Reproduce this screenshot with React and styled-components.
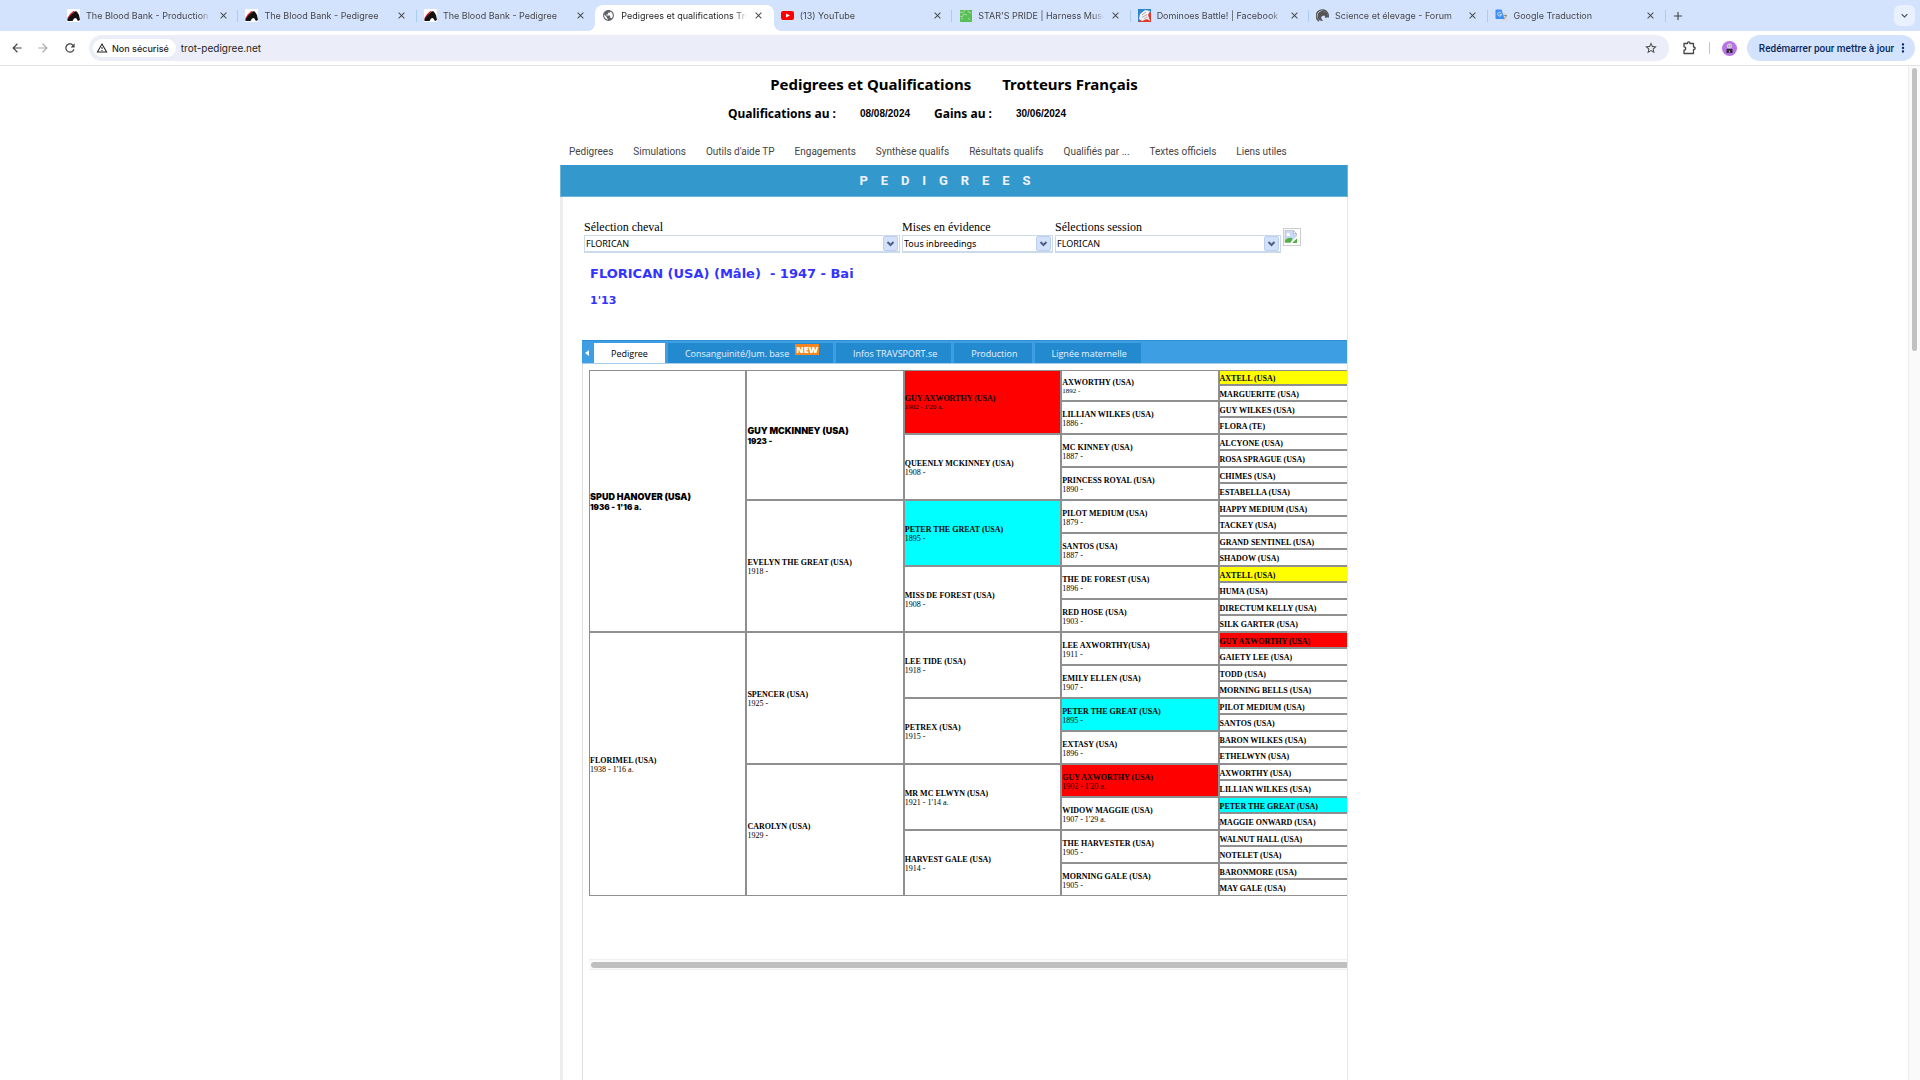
import React from 'react';
import styled, { createGlobalStyle, css } from 'styled-components';
import {
  MdAdd,
  MdArrowBack,
  MdArrowForward,
  MdClose,
  MdExpandMore,
  MdMoreVert,
  MdOutlineWarningAmber,
  MdPublic,
  MdRefresh,
  MdStarBorder,
} from 'react-icons/md';

const tahoma = "Tahoma, 'Noto Sans', sans-serif";
const tabFont = "Tahoma, 'Open Sans', sans-serif";
const times = "'Liberation Serif', 'Times New Roman', serif";
const black = "'Arial Black', Inter, sans-serif";
const wideBlack = "'Arial Black', 'DejaVu Sans', sans-serif";
const roboto = 'Roboto, sans-serif';
const system = 'Inter, sans-serif';

const GlobalStyle = createGlobalStyle`
  * {
    box-sizing: border-box;
  }

  body {
    margin: 0;
    background: #fff;
    color: #000;
    overflow: hidden;
  }

  button, input, select {
    margin: 0;
    padding: 0;
    border: 0;
    background: none;
    color: inherit;
    font: inherit;
  }

  a {
    color: inherit;
    text-decoration: none;
  }
`;

const StyledWrapper = styled.div`
  height: 100vh;
  display: flex;
  flex-direction: column;
`;

/* ---------- browser ---------- */

const StyledTabBar = styled.div`
  height: 31px;
  flex: none;
  display: flex;
  align-items: center;
  padding: 0 5px 0 60px;
  background: #d3e2fd;
  color: #474747;
  font-family: ${system};
  font-size: 9px;
`;

const StyledTabList = styled.div`
  flex: 0 1 1606px;
  min-width: 0;
  display: flex;
  align-self: stretch;
`;

const StyledBrowserTab = styled.div`
  position: relative;
  flex: 1;
  min-width: 0;
  display: flex;
  align-items: center;
  gap: 6px;
  padding: 0 9px 0 7px;

  &::after {
    content: '';
    position: absolute;
    right: 0;
    top: 10px;
    width: 1px;
    height: 12px;
    background: ${({ $divider }) => ($divider ? '#a8cdf0' : 'transparent')};
  }

  ${({ $active }) =>
    $active &&
    css`
      margin-top: 5px;
      padding-bottom: 5px;
      border-radius: 8px 8px 0 0;
      background: #fff;
      color: #1f1f1f;

      &::before,
      &::after {
        content: '';
        position: absolute;
        top: auto;
        bottom: 0;
        width: 8px;
        height: 8px;
      }

      &::before {
        left: -8px;
        background: radial-gradient(circle at 0 0, transparent 8px, #fff 8px);
      }

      &::after {
        right: -8px;
        background: radial-gradient(circle at 100% 0, transparent 8px, #fff 8px);
      }
    `}
`;

const StyledTabTitle = styled.button`
  flex: 1;
  min-width: 0;
  overflow: hidden;
  white-space: nowrap;
  text-align: left;
  mask-image: linear-gradient(to right, #000 calc(100% - 12px), transparent);
`;

const StyledIconButton = styled.button`
  flex: none;
  display: flex;
  align-items: center;
  justify-content: center;
  width: ${({ $size }) => $size}px;
  height: ${({ $size }) => $size}px;
  border-radius: 6px;
  background: ${({ $filled }) => ($filled ? '#e9f0fe' : 'none')};
  color: ${({ $muted }) => ($muted ? '#a9a9a9' : '#474747')};
`;

const StyledSpacer = styled.div`
  flex: 1;
`;

const StyledToolbar = styled.div`
  height: 35px;
  flex: none;
  display: flex;
  align-items: center;
  padding: 0 5px;
  border-bottom: 1px solid #e3e3e3;
  background: #fff;
  font-family: ${system};
  font-size: 10px;
`;

const StyledAddressBar = styled.div`
  flex: 1;
  min-width: 0;
  height: 26px;
  display: flex;
  align-items: center;
  margin: 0 10px 0 6px;
  padding: 0 8px 0 4px;
  border-radius: 13px;
  background: #ebeef8;
  color: #1f1f1f;
`;

const StyledChip = styled.button`
  height: 18px;
  display: flex;
  align-items: center;
  gap: 4px;
  padding: 0 7px 0 3px;
  border-radius: 9px;
  background: #fff;
  font-size: 9px;
  font-weight: 500;
  white-space: nowrap;
`;

const StyledUrl = styled.input`
  flex: 1;
  min-width: 0;
  margin-left: 5px;
  outline: 0;
`;

const StyledDivider = styled.div`
  width: 1px;
  height: 12px;
  margin: 0 12px 0 10px;
  background: #a8cdf0;
`;

const StyledUpdate = styled.button`
  height: 26px;
  display: flex;
  align-items: center;
  gap: 2px;
  margin-left: 10px;
  padding: 0 5px 0 12px;
  border-radius: 13px;
  background: #d3e2fd;
  color: #0b2a5e;
  font-family: ${roboto};
  font-weight: 500;
  white-space: nowrap;
`;

/* ---------- page ---------- */

const StyledViewport = styled.div`
  flex: 1;
  min-height: 0;
  display: flex;
`;

const StyledPage = styled.div`
  flex: 1;
  min-width: 0;
  display: flex;
  flex-direction: column;
  align-items: center;
`;

const StyledScrollbar = styled.div`
  width: 12px;
  flex: none;
  padding: 2px 3px;
  border-left: 1px solid #ececec;
  background: #fafafa;
`;

const StyledThumb = styled.div`
  height: 28%;
  border-radius: 3px;
  background: #c1c1c1;
`;

const StyledHeader = styled.header`
  width: 100%;
  max-width: 788px;
  padding-top: 6px;
  font-family: ${tahoma};
  font-weight: 700;
`;

const StyledTitle = styled.h1`
  margin: 0;
  display: flex;
  justify-content: center;
  gap: 31px;
  font-size: 15px;
  line-height: 24px;
`;

const StyledDates = styled.div`
  display: flex;
  gap: 24px;
  margin-top: 8px;
  padding-left: 168px;
  font-size: 12px;
  line-height: 20px;
`;

const StyledDate = styled.span`
  font-family: 'Liberation Sans', Arial, sans-serif;
  font-size: 10px;
`;

const StyledNav = styled.nav`
  display: flex;
  gap: 20px;
  margin-top: 15px;
  padding-left: 9px;
  color: #444;
  font-family: ${roboto};
  font-size: 10px;
  font-weight: 400;
  line-height: 26px;
  white-space: nowrap;
`;

const StyledMain = styled.main`
  flex: 1;
  width: 100%;
  max-width: 788px;
  display: flex;
  flex-direction: column;
`;

const StyledBanner = styled.h2`
  margin: 0;
  padding-right: 18px;
  border: 1px solid #6fb3d9;
  border-top: 0;
  background: #39c;
  color: #f2f2ff;
  font-family: ${roboto};
  font-size: 13px;
  font-weight: 700;
  line-height: 31px;
  text-align: center;
  white-space: pre;
`;

const StyledContent = styled.div`
  flex: 1;
  min-width: 0;
  display: flex;
  flex-direction: column;
  padding: 23px 0 0 19px;
  border-left: 3px solid #ededed;
  border-right: 1px solid #e6e6e6;
`;

const StyledForm = styled.form`
  display: flex;
  align-items: flex-start;
  gap: 2px;
  padding-left: 2px;
`;

const StyledField = styled.label`
  flex: 0 1 ${({ $width }) => $width}px;
  min-width: 0;
  font-family: ${times};
  font-size: 12px;
  line-height: 15px;
`;

const StyledCombo = styled.span`
  display: flex;
  align-items: center;
  height: 18px;
  padding-right: 1px;
  border: 1px solid #cbdaea;
  border-width: 1px 1px 2px;
  background: #fff;
`;

const StyledSelect = styled.select`
  flex: 1;
  min-width: 0;
  appearance: none;
  padding-left: 1px;
  font-family: ${tahoma};
  font-size: 9px;
  line-height: 14px;
  outline: 0;
`;

const StyledArrow = styled.span`
  width: 15px;
  height: 15px;
  display: flex;
  align-items: center;
  justify-content: center;
  border: 1px solid #bccff0;
  border-radius: 2px;
  background: #d3e1fb;
  color: #4d6185;
`;

const StyledMissing = styled.span`
  display: flex;
  width: 18px;
  height: 18px;
  margin-top: 8px;
  border: 1px solid #ccc;
`;

const StyledHorse = styled.h3`
  margin: 11px 0 0 8px;
  color: #33f;
  font-family: ${wideBlack};
  font-size: 13px;
  font-weight: 900;
  line-height: 20px;
  white-space: pre-wrap;
`;

const StyledRecord = styled.p`
  margin: 9px 0 0 8px;
  color: #33f;
  font-family: ${wideBlack};
  font-size: 11px;
  font-weight: 900;
  line-height: 16px;
`;

const StyledTabStrip = styled.div`
  display: flex;
  align-items: flex-end;
  gap: 3px;
  margin-top: 31px;
  height: 24px;
  border-top: 1px solid #2f8fd5;
  border-bottom: 1px solid #a5cdee;
  background: #3d9ee3;
  color: #fff;
  font-family: ${tabFont};
  font-size: 9px;
`;

const StyledPrevious = styled.button`
  width: 9px;
  height: 20px;
  display: flex;
  align-items: center;
  justify-content: center;
`;

const StyledTab = styled.button`
  height: 20px;
  display: flex;
  align-items: center;
  gap: 6px;
  padding: 0 ${({ $active }) => ($active ? 17 : 14)}px 0 17px;
  background: ${({ $active }) => ($active ? '#fff' : '#238acf')};
  color: ${({ $active }) => ($active ? '#000' : '#e8f4ff')};
  white-space: nowrap;
`;

const StyledNew = styled.span`
  align-self: flex-start;
  margin-top: 1px;
  padding: 0 1px;
  background: #f6861f;
  color: #fff;
  font-weight: 800;
  line-height: 11px;
`;

const StyledPanel = styled.div`
  flex: 1;
  min-width: 0;
  padding: 6px 0 0 6px;
  border-left: 1px solid #dedede;
  overflow: hidden;
`;

const StyledTable = styled.table`
  width: 787px;
  table-layout: fixed;
  border-collapse: separate;
  border-spacing: 0;
  font-family: ${times};
  font-size: 8px;
  line-height: 9px;

  tr:nth-child(odd) {
    height: 16px;
  }

  tr:nth-child(even) {
    height: 17px;
  }

  tr:nth-child(1) {
    height: 15px;
  }

  tr:nth-child(2) {
    height: 16px;
  }
`;

const StyledCell = styled.td`
  padding: 2px 0 0;
  border: 1px solid #8f8f8f;
  background: ${({ $mark }) => $mark || '#fff'};
  vertical-align: middle;
  white-space: nowrap;

  ${({ $strong }) =>
    $strong &&
    css`
      font-family: ${black};
      font-weight: 900;
      line-height: 11px;
    `}
`;

const StyledName = styled.div`
  font-size: ${({ $strong }) => ($strong ? 9 : 8)}px;
  font-weight: ${({ $strong }) => ($strong ? 900 : 700)};
`;

const StyledInfo = styled.div`
  font-size: ${({ $small }) => ($small ? 7 : 8)}px;
`;

const StyledTrack = styled.div`
  height: 11px;
  margin-top: 63px;
  padding: 2px 0 2px 2px;
  border: 1px solid #f0f0f0;
  border-width: 1px 0;
  background: #fafafa;
`;

const StyledTrackThumb = styled.div`
  height: 6px;
  border-radius: 3px 0 0 3px;
  background: #bfbfbf;
`;

const HorseIcon = () => (
  <svg width="13" height="13" viewBox="0 0 13 13" aria-hidden="true">
    <rect width="13" height="13" fill="#fff" />
    <path d="M0 9.500L3 5l3-2.800L8 2 6 4 2 10z" fill="#d3262b" />
    <path d="M0 11L3 7l4-4 2-1 1.500 1.500L12 6l1 5-2 1-2-3-2 .5L5.500 12H1z" fill="#111" />
  </svg>
);

const YoutubeIcon = () => (
  <svg width="13" height="13" viewBox="0 0 13 13" aria-hidden="true">
    <rect y="2" width="13" height="9" rx="2" fill="#f00" />
    <path d="M5 4.500l4 2-4 2z" fill="#fff" />
  </svg>
);

const MuseumIcon = () => (
  <svg width="13" height="13" viewBox="0 0 13 13" aria-hidden="true">
    <rect x="1" y="1" width="12" height="12" fill="#5abf57" />
    <path d="M1 3l2 1 3-2.500M1 7l2 1 2-3 3 1M9 1.500l1 2 2 .5M2 10l2-1M9 9l2 2" stroke="#a5dea0" fill="none" />
  </svg>
);

const DominoIcon = () => (
  <svg width="13" height="13" viewBox="0 0 13 13" aria-hidden="true">
    <rect width="13" height="13" fill="#2b86d0" />
    <path d="M13 3v10H0z" fill="#e03a2b" />
    <path d="M2 5l5-4 5 1-2 4 2 6-3-2-5 2-3-2z" fill="#f3f0f0" />
    <path d="M4 6l4-3M4 8.500l5-3M6 10l3-2" stroke="#b2a9b3" />
  </svg>
);

const ForumIcon = () => (
  <svg width="13" height="13" viewBox="0 0 13 13" aria-hidden="true">
    <path d="M3 12A6 6 0 1 1 12 8.500" fill="none" stroke="#555" strokeWidth="1.500" />
    <path d="M1.500 9C1 4 4 1.500 7.500 2c3 .3 4.500 3 4.500 6L9.500 9 8.500 6.500 6 7 5 9l2 3-3-.5z" fill="#555" />
  </svg>
);

const TranslateIcon = () => (
  <svg width="13" height="13" viewBox="0 0 13 13" aria-hidden="true">
    <path d="M5 4h6.500a1 1 0 0 1 1 1v6.500a1 1 0 0 1-1 1H8z" fill="#dcdcdc" />
    <path d="M1.500.5h5L9.500 10h-8a1 1 0 0 1-1-1V1.500a1 1 0 0 1 1-1z" fill="#3f8df5" />
    <path d="M6.300 4.200A1.900 1.900 0 1 0 6.500 5.500H4.800" fill="none" stroke="#fff" strokeWidth=".8" />
    <path d="M8.500 6.500h3.500M10.200 5.700v.8M11.300 6.500c-.3 1.500-1.200 2.500-2 3" fill="none" stroke="#777" strokeWidth=".7" />
  </svg>
);

const PuzzleIcon = () => (
  <svg width="16" height="16" viewBox="0 0 16 16" aria-hidden="true">
    <path
      d="M3 3.500h3.500V3a1.200 1.200 0 0 1 2.400 0v.5h3.600V7h.5a1.200 1.200 0 0 1 0 2.400h-.5V13.500H3v-3.300a1.700 1.700 0 0 0 0-3.400z"
      fill="none"
      stroke="#474747"
      strokeWidth="1.300"
      strokeLinejoin="round"
    />
  </svg>
);

const AvatarIcon = () => (
  <svg width="15" height="15" viewBox="0 0 15 15" aria-hidden="true">
    <circle cx="7.500" cy="7.500" r="7.500" fill="#b873e6" />
    <path d="M4.500 12V8.500l1.500-1h3l1.500 1V12z" fill="#2d2733" />
    <circle cx="7.500" cy="5" r="2.600" fill="#d4cdd6" />
    <path d="M6 5h1M8.200 5h1M7 9.500h1V12H7z" stroke="#5b5260" fill="#eee" strokeWidth=".7" />
  </svg>
);

const MissingIcon = () => (
  <svg width="16" height="16" viewBox="0 0 16 16" aria-hidden="true">
    <path d="M1 1.500h8.500L12.500 4.500V8L7 13.500H1z" fill="#c5d8f5" stroke="#bbb" strokeWidth=".7" />
    <path d="M9.500 1.500v3h3z" fill="#fff" stroke="#aaa" strokeWidth=".6" />
    <path d="M2.500 5.500a1.500 1.500 0 0 1 3-.3 1 1 0 0 1 .5 1.800H3z" fill="#fff" />
    <path d="M1 13.500v-2C3 8.500 6 8 8.500 9.500L7 13.500z" fill="#52b043" />
    <path d="M13 9v5H8z" fill="#52b043" />
    <path d="M13.500 7.500L7 14" stroke="#fff" strokeWidth="1.500" />
  </svg>
);

const ComboArrowIcon = () => (
  <svg width="9" height="9" viewBox="0 0 9 9" aria-hidden="true">
    <path d="M1.500 3l3 3 3-3" fill="none" stroke="currentColor" strokeWidth="2" />
  </svg>
);

const browserTabs = [
  { title: 'The Blood Bank - Production', icon: <HorseIcon />, divider: true },
  { title: 'The Blood Bank - Pedigree', icon: <HorseIcon />, divider: true },
  { title: 'The Blood Bank - Pedigree', icon: <HorseIcon /> },
  { title: 'Pedigrees et qualifications Tro', icon: <MdPublic size={13} color="#5f6368" />, active: true },
  { title: '(13) YouTube', icon: <YoutubeIcon />, divider: true },
  { title: "STAR'S PRIDE | Harness Muse", icon: <MuseumIcon />, divider: true },
  { title: 'Dominoes Battle! | Facebook', icon: <DominoIcon />, divider: true },
  { title: 'Science et élevage - Forum', icon: <ForumIcon />, divider: true },
  { title: 'Google Traduction', icon: <TranslateIcon />, divider: true },
];

const navItems = [
  'Pedigrees',
  'Simulations',
  "Outils d'aide TP",
  'Engagements',
  'Synthèse qualifs',
  'Résultats qualifs',
  'Qualifiés par ...',
  'Textes officiels',
  'Liens utiles',
];

const fields = [
  { label: 'Sélection cheval', value: 'FLORICAN', width: 316 },
  { label: 'Mises en évidence', value: 'Tous inbreedings', width: 151 },
  { label: 'Sélections session', value: 'FLORICAN', width: 226 },
];

const tabs = [
  { title: 'Pedigree', active: true },
  { title: 'Consanguinité/Jum. base', isNew: true },
  { title: 'Infos TRAVSPORT.se' },
  { title: 'Production' },
  { title: 'Lignée maternelle' },
];

const RED = '#f00';
const CYAN = '#0ff';
const YELLOW = '#ff0';

// One list per generation, from the parents to the 32 ancestors of the last column.
const generations = [
  [
    { name: 'SPUD HANOVER (USA)', info: "1936 - 1'16 a.", strong: true },
    { name: 'FLORIMEL (USA)', info: "1938 - 1'16 a." },
  ],
  [
    { name: 'GUY MCKINNEY (USA)', info: '1923 -', strong: true },
    { name: 'EVELYN THE GREAT (USA)', info: '1918 -' },
    { name: 'SPENCER (USA)', info: '1925 -' },
    { name: 'CAROLYN (USA)', info: '1929 -' },
  ],
  [
    { name: 'GUY AXWORTHY (USA)', info: "1902 - 1'20 a.", mark: RED, small: true },
    { name: 'QUEENLY MCKINNEY (USA)', info: '1908 -' },
    { name: 'PETER THE GREAT (USA)', info: '1895 -', mark: CYAN },
    { name: 'MISS DE FOREST (USA)', info: '1908 -' },
    { name: 'LEE TIDE (USA)', info: '1918 -' },
    { name: 'PETREX (USA)', info: '1915 -' },
    { name: 'MR MC ELWYN (USA)', info: "1921 - 1'14 a." },
    { name: 'HARVEST GALE (USA)', info: '1914 -' },
  ],
  [
    { name: 'AXWORTHY (USA)', info: '1892 -', small: true },
    { name: 'LILLIAN WILKES (USA)', info: '1886 -' },
    { name: 'MC KINNEY (USA)', info: '1887 -' },
    { name: 'PRINCESS ROYAL (USA)', info: '1890 -' },
    { name: 'PILOT MEDIUM (USA)', info: '1879 -' },
    { name: 'SANTOS (USA)', info: '1887 -' },
    { name: 'THE DE FOREST (USA)', info: '1896 -' },
    { name: 'RED HOSE (USA)', info: '1903 -' },
    { name: 'LEE AXWORTHY(USA)', info: '1911 -' },
    { name: 'EMILY ELLEN (USA)', info: '1907 -' },
    { name: 'PETER THE GREAT (USA)', info: '1895 -', mark: CYAN },
    { name: 'EXTASY (USA)', info: '1896 -' },
    { name: 'GUY AXWORTHY (USA)', info: "1902 - 1'20 a.", mark: RED },
    { name: 'WIDOW MAGGIE (USA)', info: "1907 - 1'29 a." },
    { name: 'THE HARVESTER (USA)', info: '1905 -' },
    { name: 'MORNING GALE (USA)', info: '1905 -' },
  ],
  [
    { name: 'AXTELL (USA)', mark: YELLOW },
    { name: 'MARGUERITE (USA)' },
    { name: 'GUY WILKES (USA)' },
    { name: 'FLORA (TE)' },
    { name: 'ALCYONE (USA)' },
    { name: 'ROSA SPRAGUE (USA)' },
    { name: 'CHIMES (USA)' },
    { name: 'ESTABELLA (USA)' },
    { name: 'HAPPY MEDIUM (USA)' },
    { name: 'TACKEY (USA)' },
    { name: 'GRAND SENTINEL (USA)' },
    { name: 'SHADOW (USA)' },
    { name: 'AXTELL (USA)', mark: YELLOW },
    { name: 'HUMA (USA)' },
    { name: 'DIRECTUM KELLY (USA)' },
    { name: 'SILK GARTER (USA)' },
    { name: 'GUY AXWORTHY (USA)', mark: RED },
    { name: 'GAIETY LEE (USA)' },
    { name: 'TODD (USA)' },
    { name: 'MORNING BELLS (USA)' },
    { name: 'PILOT MEDIUM (USA)' },
    { name: 'SANTOS (USA)' },
    { name: 'BARON WILKES (USA)' },
    { name: 'ETHELWYN (USA)' },
    { name: 'AXWORTHY (USA)' },
    { name: 'LILLIAN WILKES (USA)' },
    { name: 'PETER THE GREAT (USA)', mark: CYAN },
    { name: 'MAGGIE ONWARD (USA)' },
    { name: 'WALNUT HALL (USA)' },
    { name: 'NOTELET (USA)' },
    { name: 'BARONMORE (USA)' },
    { name: 'MAY GALE (USA)' },
  ],
];

const ROWS = 32;

const Browser = () => (
  <>
    <StyledTabBar>
      <StyledTabList>
        {browserTabs.map(({ title, icon, active, divider }, index) => (
          <StyledBrowserTab key={index} $active={active} $divider={divider}>
            {icon}
            <StyledTabTitle type="button">{title}</StyledTabTitle>
            <StyledIconButton type="button" $size={12} aria-label="Fermer">
              <MdClose size={11} />
            </StyledIconButton>
          </StyledBrowserTab>
        ))}
      </StyledTabList>
      <StyledIconButton type="button" $size={24} aria-label="Nouvel onglet">
        <MdAdd size={14} />
      </StyledIconButton>
      <StyledSpacer />
      <StyledIconButton type="button" $size={21} $filled aria-label="Rechercher dans les onglets">
        <MdExpandMore size={13} />
      </StyledIconButton>
    </StyledTabBar>
    <StyledToolbar>
      <StyledIconButton type="button" $size={24} aria-label="Retour">
        <MdArrowBack size={14} />
      </StyledIconButton>
      <StyledIconButton type="button" $size={28} $muted aria-label="Avancer">
        <MdArrowForward size={14} />
      </StyledIconButton>
      <StyledIconButton type="button" $size={26} aria-label="Actualiser">
        <MdRefresh size={14} />
      </StyledIconButton>
      <StyledAddressBar>
        <StyledChip type="button">
          <MdOutlineWarningAmber size={12} />
          Non sécurisé
        </StyledChip>
        <StyledUrl aria-label="Adresse" defaultValue="trot-pedigree.net" />
        <StyledIconButton type="button" $size={20} aria-label="Favoris">
          <MdStarBorder size={14} />
        </StyledIconButton>
      </StyledAddressBar>
      <StyledIconButton type="button" $size={20} aria-label="Extensions">
        <PuzzleIcon />
      </StyledIconButton>
      <StyledDivider />
      <StyledIconButton type="button" $size={15} aria-label="Profil">
        <AvatarIcon />
      </StyledIconButton>
      <StyledUpdate type="button">
        Redémarrer pour mettre à jour
        <MdMoreVert size={14} />
      </StyledUpdate>
    </StyledToolbar>
  </>
);

const PedigreeTable = () => (
  <StyledTable>
    <tbody>
      {Array.from({ length: ROWS }, (_, row) => (
        <tr key={row}>
          {generations.map((horses, generation) => {
            const span = ROWS / horses.length;
            if (row % span !== 0) return null;
            const { name, info, mark, strong, small } = horses[row / span];
            return (
              <StyledCell key={generation} rowSpan={span} $mark={mark} $strong={strong}>
                <StyledName $strong={strong}>{name}</StyledName>
                {info && <StyledInfo $small={small}>{info}</StyledInfo>}
              </StyledCell>
            );
          })}
        </tr>
      ))}
    </tbody>
  </StyledTable>
);

const App = () => (
  <StyledWrapper>
    <GlobalStyle />
    <Browser />
    <StyledViewport>
      <StyledPage>
        <StyledHeader>
          <StyledTitle>
            <span>Pedigrees et Qualifications</span>
            <span>Trotteurs Français</span>
          </StyledTitle>
          <StyledDates>
            <span>Qualifications au :</span>
            <StyledDate>08/08/2024</StyledDate>
            <span>Gains au :</span>
            <StyledDate>30/06/2024</StyledDate>
          </StyledDates>
          <StyledNav>
            {navItems.map((item) => (
              <a key={item} href="#">
                {item}
              </a>
            ))}
          </StyledNav>
        </StyledHeader>
        <StyledMain>
          <StyledBanner>{'P    E    D    I    G    R    E    E    S'}</StyledBanner>
          <StyledContent>
            <StyledForm>
              {fields.map(({ label, value, width }) => (
                <StyledField key={label} $width={width}>
                  {label}
                  <StyledCombo>
                    <StyledSelect defaultValue={value}>
                      <option>{value}</option>
                    </StyledSelect>
                    <StyledArrow>
                      <ComboArrowIcon />
                    </StyledArrow>
                  </StyledCombo>
                </StyledField>
              ))}
              <StyledMissing>
                <MissingIcon />
              </StyledMissing>
            </StyledForm>
            <StyledHorse>{'FLORICAN (USA) (Mâle)  - 1947 - Bai'}</StyledHorse>
            <StyledRecord>1'13</StyledRecord>
            <StyledTabStrip role="tablist">
              <StyledPrevious type="button" aria-label="Onglets précédents">
                <svg width="4" height="6" viewBox="0 0 4 6" aria-hidden="true">
                  <path d="M4 0v6L0 3z" fill="#fff" />
                </svg>
              </StyledPrevious>
              {tabs.map(({ title, active, isNew }) => (
                <StyledTab key={title} type="button" role="tab" aria-selected={!!active} $active={active}>
                  {title}
                  {isNew && <StyledNew>NEW</StyledNew>}
                </StyledTab>
              ))}
            </StyledTabStrip>
            <StyledPanel>
              <PedigreeTable />
              <StyledTrack>
                <StyledTrackThumb />
              </StyledTrack>
            </StyledPanel>
          </StyledContent>
        </StyledMain>
      </StyledPage>
      <StyledScrollbar>
        <StyledThumb />
      </StyledScrollbar>
    </StyledViewport>
  </StyledWrapper>
);

export default App;
